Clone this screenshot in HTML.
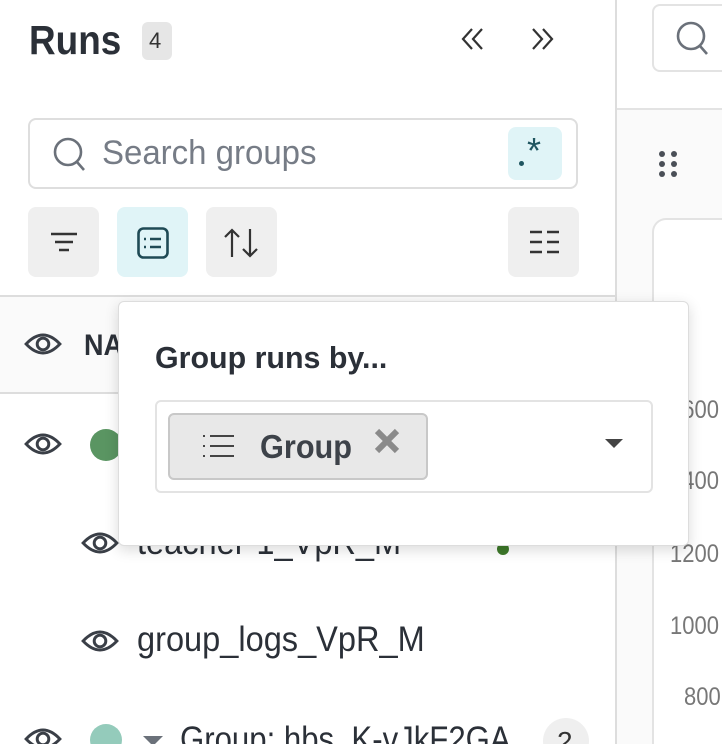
<!DOCTYPE html>
<html style="width:722px;height:744px;overflow:hidden"><head><meta charset="utf-8"><style>
*{margin:0;padding:0;box-sizing:border-box}
body{width:722px;height:744px;overflow:hidden;background:#fff;font-family:"Liberation Sans",sans-serif;color:#2b3038;position:relative}
.a{position:absolute}
.t{position:absolute;white-space:nowrap;transform-origin:0 50%}
.btn{position:absolute;top:207px;width:71px;height:70px;border-radius:8px;background:#efefef}
.eye{position:absolute;width:38px;height:28px}
</style></head><body>
<svg width="0" height="0" style="position:absolute"><defs><symbol id="eye" viewBox="0 0 36 26"><path d="M2 13 Q18 -4 34 13 Q18 30 2 13 Z" fill="none" stroke="#3a3f47" stroke-width="2.8"/><circle cx="18" cy="13" r="5.5" fill="none" stroke="#3a3f47" stroke-width="2.8"/></symbol></defs></svg>

<div class="t" style="left:29px;top:17px;font-size:41px;font-weight:bold;transform:scaleX(.9);color:#2b3038">Runs</div>
<div class="a" style="left:142px;top:22px;width:30px;height:38px;border-radius:6px;background:#e6e6e6"></div>
<div class="t" style="left:149px;top:28px;font-size:22px;color:#333">4</div>
<svg class="a" style="left:458px;top:26px" width="32" height="26"><path d="M14 3 L5 13 L14 23 M24 3 L15 13 L24 23" fill="none" stroke="#333" stroke-width="2.2"/></svg>
<svg class="a" style="left:528px;top:26px" width="32" height="26"><path d="M5 3 L14 13 L5 23 M15 3 L24 13 L15 23" fill="none" stroke="#333" stroke-width="2.2"/></svg>

<div class="a" style="left:28px;top:118px;width:550px;height:71px;border:2px solid #dedede;border-radius:8px"></div>
<svg class="a" style="left:50px;top:135px" width="40" height="40"><circle cx="18" cy="17" r="13" fill="none" stroke="#6b717a" stroke-width="2.6"/><path d="M27 27 L34 35" stroke="#6b717a" stroke-width="2.6"/></svg>
<div class="t" style="left:102px;top:134px;font-size:34px;color:#767c86;transform:scaleX(.97)">Search groups</div>
<div class="a" style="left:508px;top:127px;width:54px;height:53px;border-radius:8px;background:#e0f4f7"></div>
<div class="a" style="left:519px;top:161px;width:5px;height:5px;border-radius:50%;background:#1f5560"></div>
<div class="t" style="left:527px;top:130px;font-size:36px;color:#1f5560">*</div>

<div class="btn" style="left:28px"></div>
<svg class="a" style="left:48px;top:228px" width="32" height="30"><path d="M3 6H29M7 14H25M11 22H21" stroke="#333" stroke-width="2.4"/></svg>
<div class="btn" style="left:117px;background:#e0f4f7"></div>
<svg class="a" style="left:136px;top:226px" width="34" height="34"><rect x="2.5" y="2.5" width="29" height="29" rx="5" fill="none" stroke="#1f4a55" stroke-width="2.6"/><path d="M8 13h2M8 21h2M14 13h11M14 21h11" stroke="#1f4a55" stroke-width="2.4"/></svg>
<div class="btn" style="left:206px"></div>
<svg class="a" style="left:222px;top:226px" width="40" height="34"><path d="M10 31V4M3 11L10 4L17 11M28 3V30M21 23L28 30L35 23" fill="none" stroke="#333" stroke-width="2.2"/></svg>
<div class="btn" style="left:508px"></div>
<svg class="a" style="left:527px;top:228px" width="34" height="30"><path d="M3 4H15M20 4H32M3 14H15M20 14H32M3 24H15M20 24H32" stroke="#333" stroke-width="2.4"/></svg>

<div class="a" style="left:0;top:295px;width:616px;height:99px;background:#fafafa;border-top:2px solid #ddd;border-bottom:2px solid #ddd"></div>
<svg class="eye" style="left:24px;top:330px"><use href="#eye"/></svg>
<div class="t" style="left:84px;top:329px;font-size:30px;font-weight:bold;color:#2b3038;transform:scaleX(.9)">NA</div>

<svg class="eye" style="left:24px;top:430px"><use href="#eye"/></svg>
<div class="a" style="left:90px;top:429px;width:32px;height:32px;border-radius:50%;background:#5a9562"></div>

<svg class="eye" style="left:81px;top:529px"><use href="#eye"/></svg>
<div class="t" style="left:137px;top:523px;font-size:35px;color:#2b3038;transform:scaleX(.93)">teacher-1_VpR_M</div>
<div class="a" style="left:497px;top:543px;width:12px;height:12px;border-radius:50%;background:#3e7a2a"></div>

<svg class="eye" style="left:81px;top:627px"><use href="#eye"/></svg>
<div class="t" style="left:137px;top:620px;font-size:35px;color:#2b3038;transform:scaleX(.93)">group_logs_VpR_M</div>

<svg class="eye" style="left:24px;top:725px"><use href="#eye"/></svg>
<div class="a" style="left:90px;top:724px;width:32px;height:32px;border-radius:50%;background:#94cbbb"></div>
<svg class="a" style="left:142px;top:735px" width="22" height="12"><path d="M1 1H21L11 11Z" fill="#6b717a"/></svg>
<div class="t" style="left:180px;top:720px;font-size:35px;color:#2b3038;transform:scaleX(.89)">Group: hbs_K-vJkF2GA</div>
<div class="a" style="left:543px;top:718px;width:46px;height:46px;border-radius:50%;background:#efefef"></div>
<div class="t" style="left:557px;top:726px;font-size:28px;color:#333">2</div>

<div class="a" style="left:615px;top:0;width:2px;height:744px;background:#ddd"></div>

<div class="a" style="left:617px;top:108px;width:105px;height:636px;background:#fafafa;border-top:2px solid #e3e3e3"></div>
<div class="a" style="left:652px;top:4px;width:90px;height:68px;border:2px solid #e3e3e3;border-radius:8px;background:#fff"></div>
<svg class="a" style="left:673px;top:20px" width="40" height="40"><circle cx="18" cy="16" r="13" fill="none" stroke="#6b717a" stroke-width="2.6"/><path d="M27 26 L34 34" stroke="#6b717a" stroke-width="2.6"/></svg>
<svg class="a" style="left:658px;top:150px" width="26" height="30"><g fill="#4a4f57"><circle cx="4" cy="4" r="3"/><circle cx="16" cy="4" r="3"/><circle cx="4" cy="14" r="3"/><circle cx="16" cy="14" r="3"/><circle cx="4" cy="24" r="3"/><circle cx="16" cy="24" r="3"/></g></svg>
<div class="a" style="left:652px;top:218px;width:90px;height:526px;border:2px solid #e3e3e3;border-bottom:none;border-radius:14px 14px 0 0;background:#fff"></div>
<div class="t" style="left:670px;top:396px;font-size:25px;color:#777;transform:scaleX(.88)">1600</div>
<div class="t" style="left:670px;top:467px;font-size:25px;color:#777;transform:scaleX(.88)">1400</div>
<div class="t" style="left:670px;top:540px;font-size:25px;color:#777;transform:scaleX(.88)">1200</div>
<div class="t" style="left:670px;top:612px;font-size:25px;color:#777;transform:scaleX(.88)">1000</div>
<div class="t" style="left:684px;top:683px;font-size:25px;color:#777;transform:scaleX(.88)">800</div>

<div class="a" style="left:118px;top:301px;width:571px;height:245px;background:#fff;border:1px solid #ddd;border-radius:6px;box-shadow:0 4px 14px rgba(0,0,0,.15)"></div>
<div class="t" style="left:155px;top:340px;font-size:31px;font-weight:bold;color:#2b3038;transform:scaleX(.98)">Group runs by...</div>
<div class="a" style="left:155px;top:400px;width:498px;height:93px;border:2px solid #e3e3e3;border-radius:6px"></div>
<div class="a" style="left:168px;top:413px;width:260px;height:67px;border:2px solid #c8c8c8;border-radius:6px;background:#e8e8e8"></div>
<svg class="a" style="left:200px;top:433px" width="36" height="26"><path d="M3 3h2M3 13h2M3 23h2M10 3h24M10 13h24M10 23h24" stroke="#444" stroke-width="2"/></svg>
<div class="t" style="left:260px;top:428px;font-size:33px;font-weight:bold;color:#3d4249;transform:scaleX(.93)">Group</div>
<svg class="a" style="left:373px;top:428px" width="28" height="28"><path d="M4 3L24 23M24 3L4 23" stroke="#8a8a8a" stroke-width="6"/></svg>
<svg class="a" style="left:604px;top:438px" width="20" height="12"><path d="M1 1H19L10 10Z" fill="#444"/></svg>
</body></html>
